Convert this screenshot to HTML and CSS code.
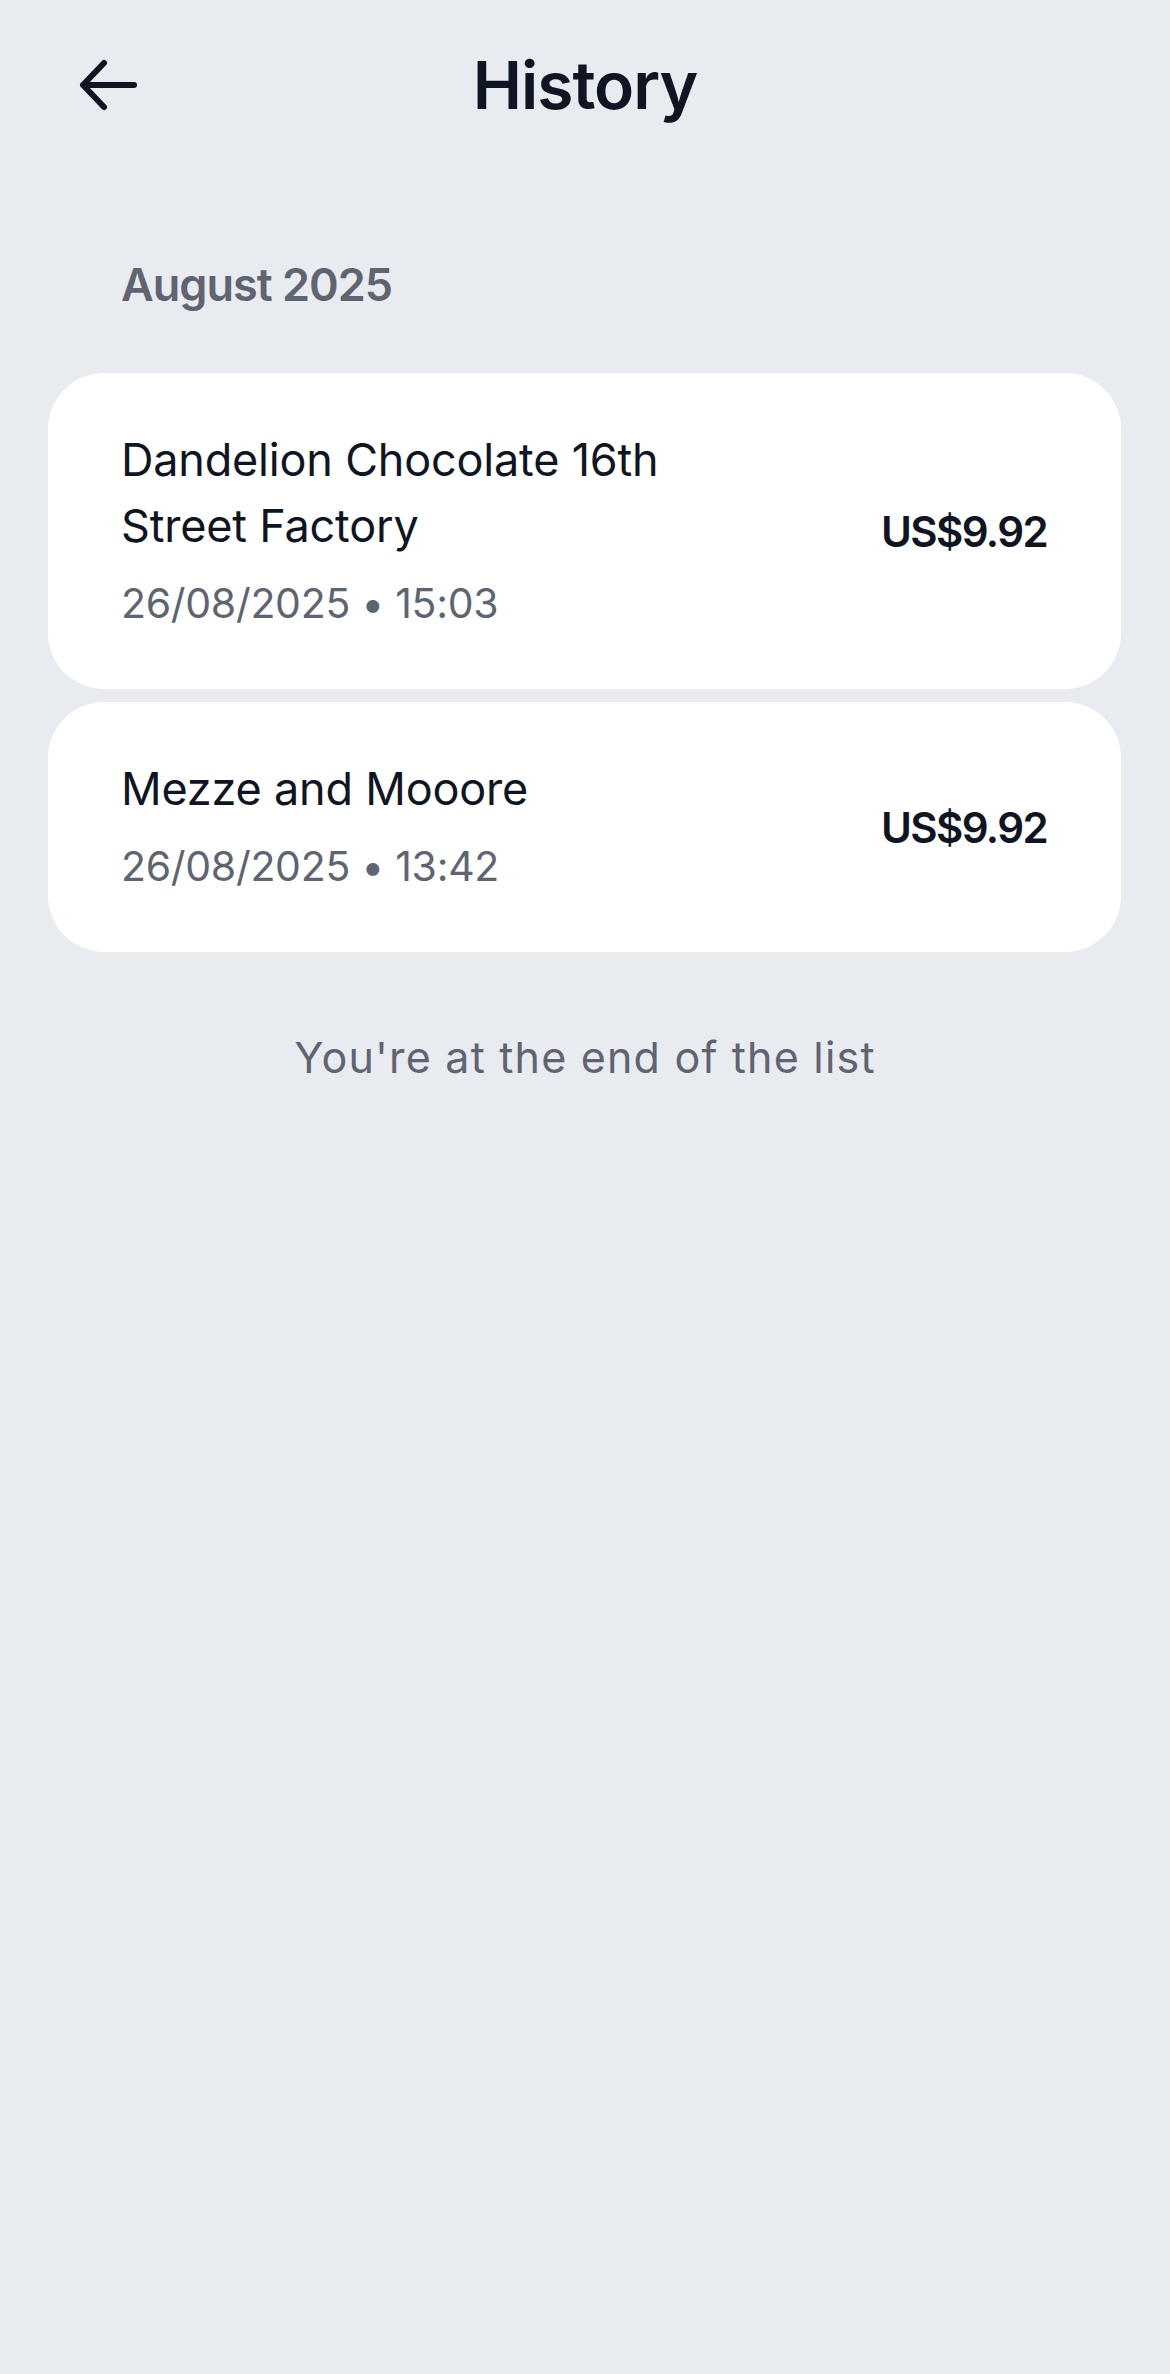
FILE: index.html
```html
<!DOCTYPE html>
<html lang="en">
<head>
    <meta charset="UTF-8">
    <meta name="viewport" content="width=device-width, initial-scale=1.0">
    <title>History</title>
    <link rel="stylesheet" href="styles.css">
</head>
<body>
    <div class="topbar">
        <button class="back-btn" aria-label="Back">
            <svg width="60" height="52" viewBox="0 0 60 52">
                <path d="M26 4 L5 26 L26 48 M5 26 H56" fill="none" stroke="#0f1522" stroke-width="6" stroke-linecap="round" stroke-linejoin="round"/>
            </svg>
        </button>
        <h1 class="title">History</h1>
    </div>

    <div class="month-label">August 2025</div>

    <div class="tx-list">
        <div class="tx-card">
            <div class="tx-info">
                <div class="tx-name">Dandelion Chocolate 16th<br>Street Factory</div>
                <div class="tx-date">26/08/2025 • 15:03</div>
            </div>
            <div class="tx-amount">US$9.92</div>
        </div>
        <div class="tx-card">
            <div class="tx-info">
                <div class="tx-name">Mezze and Mooore</div>
                <div class="tx-date">26/08/2025 • 13:42</div>
            </div>
            <div class="tx-amount">US$9.92</div>
        </div>
    </div>

    <div class="list-end">You're at the end of the list</div>
</body>
</html>
```

FILE: styles.css
```css
:root {
    --bg: #e8ebf0;
    --text: #0f1522;
    --muted: #5e6470;
}

body {
    margin: 0;
    font-family: 'Inter', 'Liberation Sans', sans-serif;
    background: var(--bg);
    color: var(--text);
}

.topbar {
    position: relative;
    height: 170px;
    display: flex;
    align-items: center;
    justify-content: center;
}

.back-btn {
    position: absolute;
    left: 78px;
    top: 59px;
    padding: 0;
    border: none;
    background: none;
    display: flex;
}

.title {
    margin: 0;
    font-size: 66px;
    font-weight: 600;
    letter-spacing: -1px;
    line-height: 80px;
}

.month-label {
    margin: 87px 0 0 121px;
    font-size: 45px;
    line-height: 56px;
    font-weight: 600;
    color: var(--muted);
    letter-spacing: -1px;
}

.tx-list {
    margin: 60px 49px 0 48px;
    display: flex;
    flex-direction: column;
    gap: 13px;
}

.tx-card {
    background: #fff;
    border-radius: 56px;
    padding: 54px 74px 61px 73px;
    display: flex;
    align-items: center;
    justify-content: space-between;
}

.tx-name {
    font-size: 45px;
    line-height: 66px;
    letter-spacing: -0.2px;
}

.tx-date {
    margin-top: 19px;
    font-size: 41px;
    line-height: 50px;
    color: var(--muted);
    letter-spacing: -0.3px;
}

.tx-amount {
    margin-top: 8px;
    font-size: 42px;
    font-weight: 600;
    letter-spacing: -1.6px;
}

.list-end {
    margin-top: 79px;
    text-align: center;
    font-size: 43px;
    line-height: 52px;
    color: var(--muted);
    letter-spacing: 1.2px;
}
```
